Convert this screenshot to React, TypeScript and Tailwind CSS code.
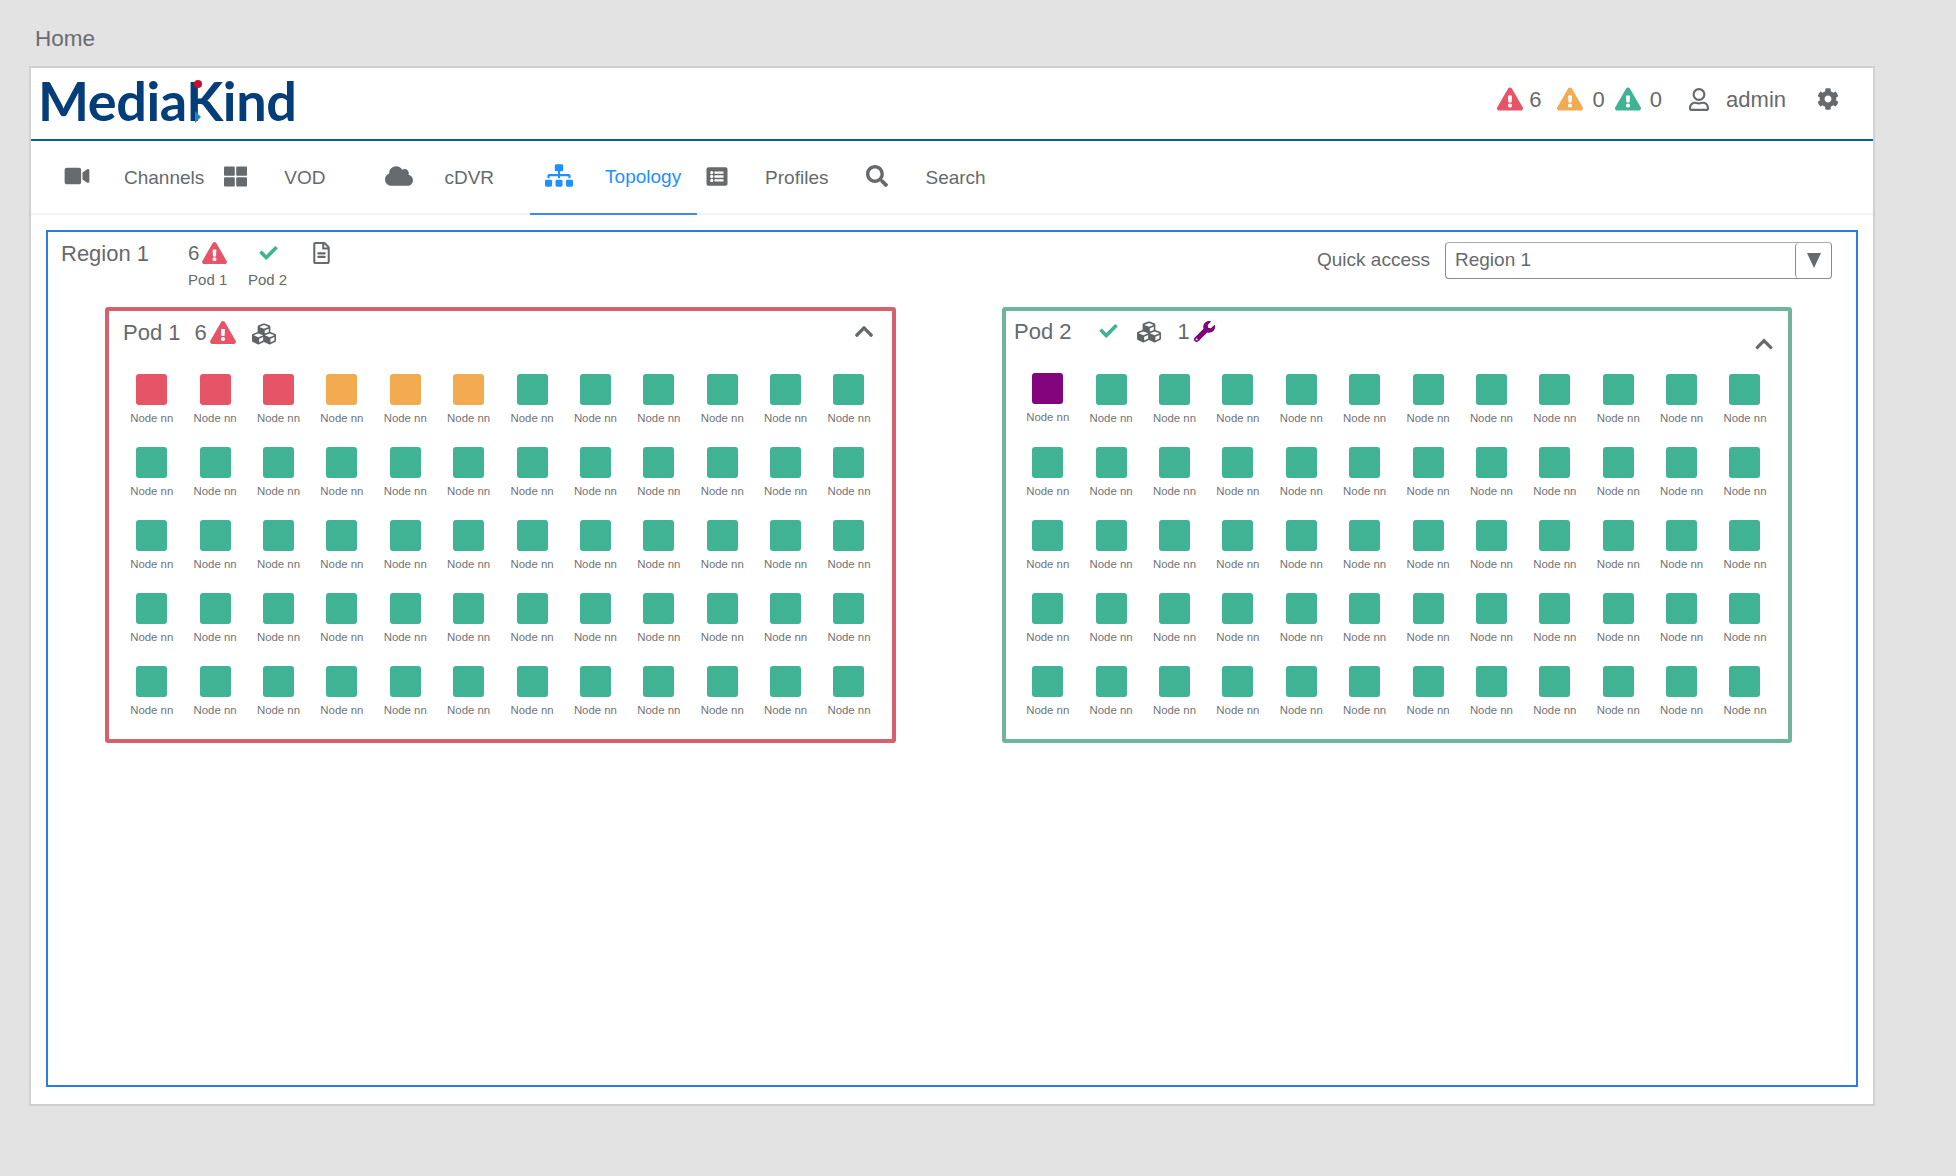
import React from "react";
import { FaVideo, FaThLarge, FaCloud, FaSitemap, FaListAlt, FaSearch, FaExclamationTriangle, FaCheck, FaRegFileAlt, FaCubes, FaWrench, FaCog, FaChevronUp, FaRegUser } from "react-icons/fa";

function Tab({ icon, label, active, className, iconBox = "w-[60px]" }: { icon: React.ReactNode; label: string; active?: boolean; className: string; iconBox?: string }) {
  return (
    <div className={`flex h-[74px] items-center ${active ? "border-b-2 border-[#3b8bf0] text-[#1e90ff]" : "text-[#666a6d]"} ${className}`}>
      <span className={`flex items-center ${iconBox}`}>{icon}</span>
      <span className="mt-[-2px] text-[19px] leading-none">{label}</span>
    </div>
  );
}

function Node({ color, up }: { color: string; up?: boolean }) {
  return (
    <div className={`flex flex-col items-center ${up ? "-translate-y-px" : ""}`}>
      <div className={`h-[31px] w-[31px] rounded-[3px] ${color}`} />
      <span className="mt-[6px] text-[11.4px] leading-[14px] text-[#6f7376]">Node nn</span>
    </div>
  );
}

function Pod({ colors, className, gridClass, header, firstUp }: { colors: string[]; className: string; gridClass: string; header: React.ReactNode; firstUp?: boolean }) {
  return (
    <div className={`h-[436px] rounded-[3px] border-4 ${className}`}>
      {header}
      <div className={`grid grid-cols-[repeat(12,63.4px)] gap-y-[22px] ${gridClass}`}>
        {colors.map((c, i) => (
          <Node key={i} color={c} up={firstUp && i === 0} />
        ))}
      </div>
    </div>
  );
}

const G = "bg-[#3fb394]";
const R = "bg-[#e55467]";
const O = "bg-[#f2ab50]";
const P = "bg-[#82057d]";
const pod1 = [R, R, R, O, O, O, ...Array(54).fill(G)];
const pod2 = [P, ...Array(59).fill(G)];

export default function App() {
  return (
    <div className="h-[1176px] w-[1956px] overflow-hidden bg-[#e3e3e3] pl-[29px] font-['Liberation_Sans',Arial,sans-serif] text-[#666a6d]">
      <div className="flex h-[66px] items-start pl-[6px] pt-[24px] text-[22.5px] leading-[30px] text-[#6a6d70]">Home</div>

      <div className="h-[1040px] w-[1846px] border-2 border-[#d0d0d0] bg-white">
        {/* Header */}
        <div className="flex h-[73px] items-center justify-between border-b-2 border-[#0d5a9e]">
          <div className="relative ml-[7px] mt-[-6px] flex h-[50px] w-[262px] items-center font-['Lato',sans-serif] text-[54px] font-bold leading-none tracking-[-0.4px] text-[#033e78]">
            MediaKind
            <span className="absolute left-[156px] top-[4px] h-[8px] w-[8px] rounded-full bg-[#c8102e]" />
            <span className="absolute left-[157px] top-[35px] h-0 w-0 border-y-[6px] border-l-[6px] border-y-transparent border-l-[#1e88c9]" />
          </div>
          <div className="mt-[-9px] flex items-center text-[22px] leading-none">
            <FaExclamationTriangle className="h-[24px] w-[26px] text-[#e55467]" />
            <span className="ml-[6px] mt-[2px]">6</span>
            <FaExclamationTriangle className="ml-[15px] h-[24px] w-[26px] text-[#f2ab50]" />
            <span className="ml-[10px] mt-[2px]">0</span>
            <FaExclamationTriangle className="ml-[10px] h-[24px] w-[26px] text-[#3fb394]" />
            <span className="ml-[9px] mt-[2px]">0</span>
            <FaRegUser className="ml-[27px] h-[23px] w-[20px]" />
            <span className="ml-[17px] mt-[2px]">admin</span>
            <FaCog className="ml-[31px] mr-[34px] h-[22px] w-[22px]" />
          </div>
        </div>

        {/* Nav */}
        <div className="flex h-[74px] border-b-2 border-[#f3f3f3] pl-[32px]">
          <Tab icon={<FaVideo className="mt-[-4px] h-[22px] w-[28px]" />} iconBox="w-[61px]" label="Channels" className="" />
          <Tab icon={<FaThLarge className="mt-[-4px] h-[23px] w-[23px]" />} label="VOD" className="ml-[20px]" />
          <Tab icon={<FaCloud className="mt-[-4px] h-[24px] w-[28px]" />} iconBox="w-[59px]" label="cDVR" className="ml-[60px]" />
          <Tab icon={<FaSitemap className="mt-[-4px] h-[23px] w-[28px]" />} label="Topology" active className="ml-[36px] w-[167px] pl-[15px]" />
          <Tab icon={<FaListAlt className="mt-[-4px] h-[21px] w-[22px]" />} iconBox="w-[59px]" label="Profiles" className="ml-[9px]" />
          <Tab icon={<FaSearch className="ml-px mt-[-4px] h-[22px] w-[22px]" />} label="Search" className="ml-[37px]" />
        </div>

        {/* Region panel */}
        <div className="ml-[15px] mt-[15px] h-[857px] w-[1812px] border-2 border-[#2a7de1]">
          <div className="flex h-[75px] items-start pl-[13px]">
            <span className="mt-[10px] text-[22px] leading-[24px]">Region 1</span>
            <div className="ml-[39px] mt-[9px] flex w-[45px] flex-col">
              <div className="flex h-[24px] items-center text-[20.5px] leading-none">
                <span>6</span>
                <FaExclamationTriangle className="ml-[3px] h-[22px] w-[25px] text-[#e55467]" />
              </div>
              <span className="mt-[6px] text-[15px] leading-[18px]">Pod 1</span>
            </div>
            <div className="ml-[12px] mt-[9px] flex w-[45px] flex-col items-center">
              <div className="flex h-[24px] items-center">
                <FaCheck className="ml-[2px] h-[18px] w-[23px] text-[#3fb394]" />
              </div>
              <span className="mt-[6px] text-[15px] leading-[18px]">Pod 2</span>
            </div>
            <FaRegFileAlt className="ml-[23px] mt-[10px] h-[22px] w-[17px]" />
            <div className="ml-auto mr-[24px] mt-[10px] flex items-center">
              <span className="mr-[15px] text-[19px]">Quick access</span>
              <div className="flex h-[37px] w-[387px] items-center justify-between rounded-[4px] border border-[#8a8a8a] border-t-[#aaaaaa] pl-[9px] text-[19px]">
                <span>Region 1</span>
                <span className="flex h-full w-[36px] items-center justify-center rounded-[4px] border-l border-[#8a8a8a]">
                  <span className="h-0 w-0 border-x-[7px] border-t-[15px] border-x-transparent border-t-[#666a6d]" />
                </span>
              </div>
            </div>
          </div>

          <div className="flex gap-[106px] pl-[57px]">
            <Pod
              colors={pod1}
              className="w-[791px] border-[#d6606c]"
              gridClass="pl-[11px]"
              header={
                <div className="flex h-[63px] items-start pl-[14px] pr-[17px] pt-[10px]">
                  <span className="text-[22px] leading-[24px]">Pod 1</span>
                  <span className="ml-[14px] text-[22px] leading-[24px]">6</span>
                  <FaExclamationTriangle className="ml-[3px] h-[23px] w-[26px] text-[#e55467]" />
                  <FaCubes className="ml-[15px] mt-[1px] h-[24px] w-[26px] text-[#5f6366]" />
                  <FaChevronUp className="ml-auto h-[21px] w-[22px]" />
                </div>
              }
            />
            <Pod
              colors={pod2}
              firstUp
              className="w-[790px] border-[#6fb59c]"
              gridClass="pl-[10px]"
              header={
                <div className="flex h-[63px] items-start pl-[8px] pr-[13px] pt-[9px]">
                  <span className="text-[22px] leading-[24px]">Pod 2</span>
                  <FaCheck className="ml-[25px] mt-[2px] h-[18px] w-[23px] text-[#3fb394]" />
                  <FaCubes className="ml-[16px] h-[24px] w-[26px] text-[#5f6366]" />
                  <span className="ml-[16px] text-[22px] leading-[24px]">1</span>
                  <FaWrench className="ml-[4px] mt-[1px] h-[21px] w-[21px] text-[#82057d]" />
                  <FaChevronUp className="ml-auto mt-[14px] h-[20px] w-[22px]" />
                </div>
              }
            />
          </div>
        </div>
      </div>
    </div>
  );
}
